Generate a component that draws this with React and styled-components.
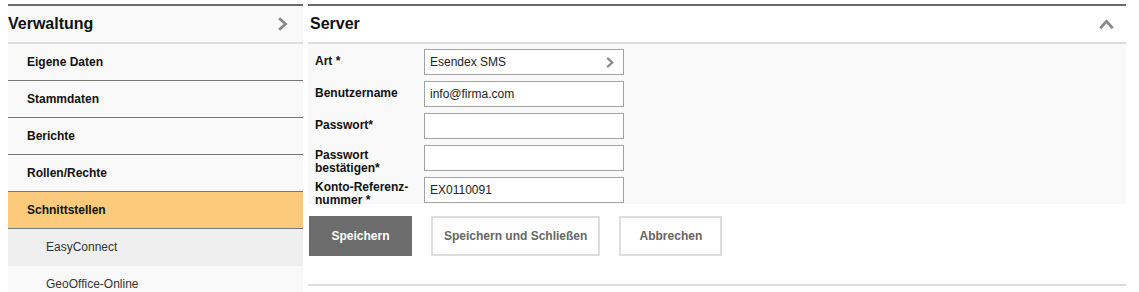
import React from "react";
import styled, { createGlobalStyle } from "styled-components";

const GlobalStyle = createGlobalStyle`
  body {
    margin: 0;
    background: #fff;
    font-family: "Liberation Sans", Arial, sans-serif;
    color: #111;
  }
`;

const Page = styled.div`
  display: flex;
  gap: 5px;
  padding: 4px 13px 0 8px;
`;

const Sidebar = styled.nav`
  width: 295px;
  flex-shrink: 0;
  background: #f9f9f9;
  border-top: 2px solid #6b6b6b;
`;

const SideHeader = styled.div`
  display: flex;
  align-items: center;
  justify-content: space-between;
  height: 36px;
  padding-right: 14px;
  border-bottom: 2px solid #dedede;
  font-size: 16px;
  font-weight: bold;
`;

const MenuItem = styled.div`
  display: flex;
  align-items: center;
  height: 36px;
  padding-left: ${(p) => (p.$sub ? "38px" : "19px")};
  font-size: 12px;
  font-weight: ${(p) => (p.$sub ? "normal" : "bold")};
  color: ${(p) => (p.$sub ? "#333" : "#111")};
  background: ${(p) => (p.$active ? "#fbcb7b" : p.$shade ? "#efefef" : "transparent")};
  border-bottom: 1px solid ${(p) => (p.$sub ? "transparent" : "#777")};
`;

const Main = styled.section`
  flex: 1;
  border-top: 2px solid #6b6b6b;
`;

const MainHeader = styled.div`
  display: flex;
  align-items: center;
  justify-content: space-between;
  height: 36px;
  padding: 0 12px 0 2px;
  border-bottom: 2px solid #dedede;
  font-size: 16px;
  font-weight: bold;
`;

const Form = styled.div`
  display: flex;
  flex-direction: column;
  gap: 6px;
  height: 155px;
  padding-top: 5px;
  background: #f9f9f9;
  overflow: hidden;
`;

const Row = styled.div`
  display: flex;
  align-items: flex-start;
  height: 26px;
`;

const Label = styled.label`
  width: 102px;
  padding: ${(p) => (p.$wrap ? "4px" : "6px")} 7px 0 7px;
  font-size: 12px;
  font-weight: bold;
  line-height: 13px;
  color: #111;
`;

const Field = styled.div`
  display: flex;
  align-items: center;
  justify-content: space-between;
  box-sizing: border-box;
  width: 200px;
  height: 26px;
  padding: 0 8px 0 5px;
  background: #fff;
  border: 1px solid #a3a3a3;
  font-size: 12px;
  color: #222;
`;

const Actions = styled.div`
  display: flex;
  gap: 19px;
  padding: 12px 0 28px 1px;
  border-bottom: 2px solid #dedede;
`;

const Button = styled.button`
  box-sizing: border-box;
  min-width: 103px;
  height: 40px;
  padding: 0 11px;
  font-family: "Liberation Sans", Arial, sans-serif;
  font-size: 12px;
  font-weight: bold;
  color: ${(p) => (p.$primary ? "#fff" : "#666")};
  background: ${(p) => (p.$primary ? "#6d6d6d" : "#fff")};
  border: 2px solid ${(p) => (p.$primary ? "#6d6d6d" : "#dedede")};
`;

const Chevron = ({ dir = "right", size = 12 }) => (
  <svg width={size} height={size} viewBox="0 0 12 12">
    <path
      d={dir === "up" ? "M1 9 L6 3.5 L11 9" : "M3.5 1 L9 6 L3.5 11"}
      fill="none"
      stroke="#8a8a8a"
      strokeWidth={dir === "up" ? 2.2 : 2.4}
    />
  </svg>
);

const rows = [
  { label: "Art *", value: "Esendex SMS", select: true },
  { label: "Benutzername", value: "info@firma.com" },
  { label: "Passwort*", value: "" },
  { label: "Passwort bestätigen*", value: "", wrap: true },
  { label: "Konto-Referenz-nummer *", value: "EX0110091", wrap: true },
];

export default function App() {
  return (
    <>
      <GlobalStyle />
      <Page>
        <Sidebar>
          <SideHeader>
            Verwaltung
            <Chevron size={14} />
          </SideHeader>
          <MenuItem>Eigene Daten</MenuItem>
          <MenuItem>Stammdaten</MenuItem>
          <MenuItem>Berichte</MenuItem>
          <MenuItem>Rollen/Rechte</MenuItem>
          <MenuItem $active>Schnittstellen</MenuItem>
          <MenuItem $sub $shade>EasyConnect</MenuItem>
          <MenuItem $sub>GeoOffice-Online</MenuItem>
        </Sidebar>

        <Main>
          <MainHeader>
            Server
            <Chevron dir="up" size={15} />
          </MainHeader>
          <Form>
            {rows.map((r) => (
              <Row key={r.label}>
                <Label $wrap={r.wrap}>{r.label}</Label>
                <Field>
                  {r.value}
                  {r.select && <Chevron size={11} />}
                </Field>
              </Row>
            ))}
          </Form>
          <Actions>
            <Button $primary>Speichern</Button>
            <Button>Speichern und Schließen</Button>
            <Button>Abbrechen</Button>
          </Actions>
        </Main>
      </Page>
    </>
  );
}
